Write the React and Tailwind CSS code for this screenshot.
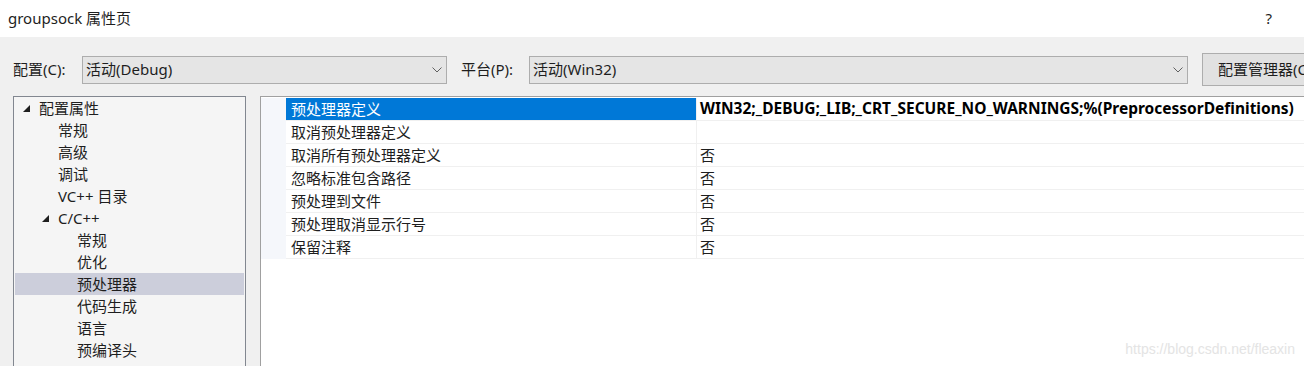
import React from 'react';

const treeItems = [
  { label: '配置属性', level: 0, open: true },
  { label: '常规', level: 1 },
  { label: '高级', level: 1 },
  { label: '调试', level: 1 },
  { label: 'VC++ 目录', level: 1 },
  { label: 'C/C++', level: 1, open: true },
  { label: '常规', level: 2 },
  { label: '优化', level: 2 },
  { label: '预处理器', level: 2, selected: true },
  { label: '代码生成', level: 2 },
  { label: '语言', level: 2 },
  { label: '预编译头', level: 2 },
];

const indent = ['pl-[8px]', 'pl-[27px]', 'pl-[46px]'];

const props = [
  { name: '预处理器定义', value: 'WIN32;_DEBUG;_LIB;_CRT_SECURE_NO_WARNINGS;%(PreprocessorDefinitions)', bold: true, selected: true },
  { name: '取消预处理器定义', value: '' },
  { name: '取消所有预处理器定义', value: '否' },
  { name: '忽略标准包含路径', value: '否' },
  { name: '预处理到文件', value: '否' },
  { name: '预处理取消显示行号', value: '否' },
  { name: '保留注释', value: '否' },
];

function Chevron() {
  return (
    <svg width="10" height="6" viewBox="0 0 10 6" className="shrink-0">
      <path d="M0.5 0.5 L5 5 L9.5 0.5" fill="none" stroke="#606060" strokeWidth="1" />
    </svg>
  );
}

function Expander() {
  return (
    <span className="w-[16px] shrink-0 flex items-center">
      <svg width="7" height="7" viewBox="0 0 7 7">
        <polygon points="7,0 7,7 0,7" fill="#1e1e1e" />
      </svg>
    </span>
  );
}

function Combo({ text, width }) {
  return (
    <div className={`${width} shrink-0 h-[28px] border border-[#adadad] bg-[#e5e5e5] flex items-center justify-between pl-[3px] pr-[4px]`}>
      <span>{text}</span>
      <Chevron />
    </div>
  );
}

export default function App() {
  return (
    <div className="relative w-[1304px] h-[366px] overflow-hidden bg-[#f0f0f0] text-[15px] leading-none text-[#1e1e1e] font-['Noto_Sans','Noto_Sans_CJK_SC',sans-serif]">
      <div className="h-[37px] bg-white flex items-center justify-between pl-[8px] pr-[32px]">
        <span>groupsock 属性页</span>
        <span>?</span>
      </div>

      <div className="h-[33px] mt-[16px] flex items-center pl-[13px] overflow-hidden">
        <span className="w-[69px] shrink-0">配置(C):</span>
        <Combo text="活动(Debug)" width="w-[365px]" />
        <span className="w-[68px] shrink-0 ml-[14px]">平台(P):</span>
        <Combo text="活动(Win32)" width="w-[659px]" />
        <div className="ml-[14px] w-[130px] h-[33px] shrink-0 border border-[#adadad] bg-[#e1e1e1] flex items-center pl-[15px] whitespace-nowrap overflow-hidden">
          配置管理器(C)
        </div>
      </div>

      <div className="flex mt-[10px] pl-[13px] h-[280px]">
        <div className="w-[233px] shrink-0 border border-[#828790] bg-[#f5f5f5] px-[1px]">
          {treeItems.map((item, i) => (
            <div
              key={i}
              className={`h-[22px] flex items-center ${indent[item.level]} ${item.selected ? 'bg-[#cccedb]' : ''}`}
            >
              {item.open ? <Expander /> : <span className="w-[16px] shrink-0" />}
              <span>{item.label}</span>
            </div>
          ))}
        </div>

        <div className="ml-[14px] flex-1 border-l border-t border-[#a0a0a0] bg-white pt-[1px]">
          <div className="flex">
            <div className="w-[25px] shrink-0 bg-[#f5f7fb]" />
            <div className="flex-1">
              {props.map((p, i) => (
                <div key={i} className="h-[23px] flex border-b border-[#f0f0f0]">
                  <div className={`w-[410px] shrink-0 flex items-center pl-[5px] ${p.selected ? 'bg-[#0078d7] text-white' : ''}`}>
                    {p.name}
                  </div>
                  <div className="flex-1 flex items-center pl-[3px] border-l border-[#f0f0f0] whitespace-nowrap">
                    <span className={p.bold ? 'font-bold text-black text-[15.5px]' : ''}>{p.value}</span>
                  </div>
                </div>
              ))}
            </div>
          </div>
        </div>
      </div>

      <div className="absolute right-[9px] bottom-[10px] text-[14px] text-[#e4e4e4] font-['Liberation_Sans',sans-serif]">
        https://blog.csdn.net/fleaxin
      </div>
    </div>
  );
}
